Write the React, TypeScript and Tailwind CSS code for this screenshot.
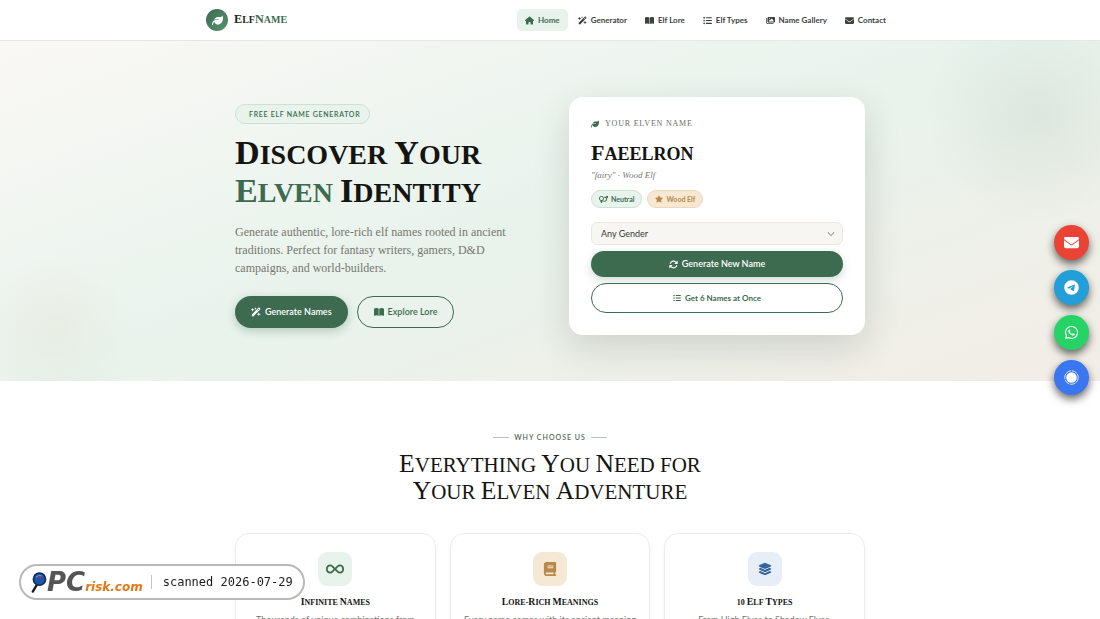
import type { ReactNode } from "react";
import { BsChevronDown } from "react-icons/bs";
import {
  FaArrowsRotate,
  FaBook,
  FaBookOpen,
  FaEnvelope,
  FaHouse,
  FaImages,
  FaInfinity,
  FaLayerGroup,
  FaLeaf,
  FaListUl,
  FaStar,
  FaTelegram,
  FaVenusMars,
  FaWandMagicSparkles,
  FaWhatsapp,
} from "react-icons/fa6";

const navItems = [
  { label: "Home", icon: FaHouse, active: true },
  { label: "Generator", icon: FaWandMagicSparkles },
  { label: "Elf Lore", icon: FaBookOpen },
  { label: "Elf Types", icon: FaListUl },
  { label: "Name Gallery", icon: FaImages },
  { label: "Contact", icon: FaEnvelope },
];

const features = [
  {
    title: "Infinite Names",
    text: "Thousands of unique combinations from authentic elven roots.",
    icon: FaInfinity,
    iconSize: "size-[18px]",
    tone: "bg-[#e8f3ec] text-[#3d6b4f]",
  },
  {
    title: "Lore-Rich Meanings",
    text: "Every name comes with its ancient meaning and history.",
    icon: FaBook,
    iconSize: "size-3.5",
    tone: "bg-[#f5e9d6] text-[#b8894a]",
  },
  {
    title: "10 Elf Types",
    text: "From High Elves to Shadow Elves, understanding every kin.",
    icon: FaLayerGroup,
    iconSize: "size-3.5",
    tone: "bg-[#e8eef8] text-[#336699]",
  },
];

// Tall small caps: every letter is a capital, the real capitals stand out a bit
function SmallCaps({ text }: { text: string }) {
  return (
    <span className="uppercase">
      {text.split(/(\s|-)/).map((word, i) =>
        /^[A-Z]/.test(word) ? (
          <span
            key={i}
            className="inline-block leading-none first-letter:text-[1.22em]"
          >
            {word}
          </span>
        ) : (
          word
        ),
      )}
    </span>
  );
}

function Header() {
  return (
    <header className="border-b border-[#e6e8e5] bg-white">
      <div className="mx-auto flex h-10 max-w-[688px] items-center justify-between">
        <a href="#" className="flex items-center gap-1.5">
          <span className="flex size-[22px] items-center justify-center rounded-full bg-linear-to-br from-[#3d6b4f] to-[#569270] text-white">
            <FaLeaf className="size-[11px]" />
          </span>
          <span className="font-['Liberation_Serif',serif] text-[10px] leading-4 font-bold text-[#1c2a20]">
            <SmallCaps text="Elf" />
            <span className="text-[#3d6b4f]">
              <SmallCaps text="Name" />
            </span>
          </span>
        </a>
        <nav className="flex items-center gap-0.5">
          {navItems.map(({ label, icon: Icon, active }) => (
            <a
              key={label}
              href="#"
              className={`flex h-[22px] items-center gap-1 rounded-[5px] px-2 text-[8px] font-bold ${
                active ? "bg-[#e8f3ec] text-[#3d6b4f]" : "text-[#3b423d]"
              }`}
            >
              <Icon className="size-[9px]" />
              {label}
            </a>
          ))}
        </nav>
      </div>
    </header>
  );
}

function NameCard() {
  return (
    <div className="rounded-[14px] bg-white p-[22px] shadow-[0_12px_36px_rgba(40,50,40,0.16)]">
      <p className="flex items-center gap-1.5 font-['Liberation_Serif',serif] text-[8px] leading-[10px] tracking-widest text-[#6b6b65] uppercase">
        <FaLeaf className="size-2 text-[#3d6b4f]" />
        Your Elven Name
      </p>
      <h2 className="mt-[11px] font-['Liberation_Serif',serif] text-[18px] leading-7 font-bold text-[#141412]">
        <SmallCaps text="Faeelron" />
      </h2>
      <p className="mt-px font-['Liberation_Serif',serif] text-[9px] leading-3 text-[#77776f] italic">
        "fairy" · Wood Elf
      </p>
      <div className="mt-[9px] flex gap-[5px] text-[7px] font-bold">
        <span className="flex h-[18px] items-center gap-[3px] rounded-full border border-[#cfe0d5] bg-[#e8f3ec] px-[7px] text-[#3d6b4f]">
          <FaVenusMars className="size-[9px]" />
          Neutral
        </span>
        <span className="flex h-[18px] items-center gap-[3px] rounded-full border border-[#ecd9bc] bg-[#f7e8d3] px-[7px] text-[#b8894a]">
          <FaStar className="size-2" />
          Wood Elf
        </span>
      </div>
      <div className="relative mt-3.5">
        <select
          aria-label="Gender"
          className="block h-[23px] w-full appearance-none rounded-md border border-[#ebe8e3] bg-[#f8f6f3] px-[9px] text-[9px] text-[#333a35]"
        >
          <option>Any Gender</option>
          <option>Female</option>
          <option>Male</option>
          <option>Neutral</option>
        </select>
        <BsChevronDown className="pointer-events-none absolute top-2 right-2 size-2 text-[#444]" />
      </div>
      <button className="mt-1.5 flex h-[26px] w-full items-center justify-center gap-1 rounded-full bg-[#3d6b4f] text-[9px] font-semibold text-white shadow-[0_3px_8px_rgba(61,107,79,0.25)]">
        <FaArrowsRotate className="size-[9px]" />
        Generate New Name
      </button>
      <button className="mt-1.5 flex h-[30px] w-full items-center justify-center gap-1 rounded-full border border-[#3d6b4f] text-[8px] font-bold text-[#3d6b4f]">
        <FaListUl className="size-2" />
        Get 6 Names at Once
      </button>
    </div>
  );
}

function Hero() {
  return (
    <section className="relative overflow-hidden bg-linear-[160deg] from-[#faf8f5] via-[#e8f3ec] to-[#f3ede6] pt-14 pb-[46px]">
      <div className="absolute -top-10 -right-12 size-56 rounded-full bg-radial from-[#3d6b4f]/8 to-[#3d6b4f]/0 to-70%" />
      <div className="absolute -bottom-8 -left-6 size-40 rounded-full bg-radial from-[#b8894a]/6 to-[#b8894a]/0 to-70%" />
      <div className="relative mx-auto grid max-w-[630px] grid-cols-2 items-center gap-[38px]">
        <div>
          <p className="flex h-5 w-fit items-center rounded-full border border-[#cfe0d5] bg-[#e8f3ec] pr-[9px] pl-[13px] text-[7px] font-semibold tracking-widest text-[#3d6b4f] uppercase">
            Free Elf Name Generator
          </p>
          <h1 className="mt-3 font-['Liberation_Serif',serif] text-[28px] leading-[38px] font-bold text-[#141412]">
            <SmallCaps text="Discover Your" />
            <br />
            <span className="text-[#3d6b4f]">
              <SmallCaps text="Elven" />
            </span>{" "}
            <SmallCaps text="Identity" />
          </h1>
          <p className="mt-[11px] font-['Liberation_Serif',serif] text-xs leading-[18px] text-[#77776f]">
            Generate authentic, lore-rich elf names rooted in ancient
            <br />
            traditions. Perfect for fantasy writers, gamers, D&amp;D
            <br />
            campaigns, and world-builders.
          </p>
          <div className="mt-[19px] flex gap-[9px] text-[9px] font-semibold">
            <button className="flex h-8 items-center gap-1 rounded-full bg-[#3d6b4f] px-4 text-white shadow-[0_3px_10px_rgba(61,107,79,0.3)]">
              <FaWandMagicSparkles className="size-2.5" />
              Generate Names
            </button>
            <button className="flex h-8 items-center gap-1 rounded-full border border-[#3d6b4f] px-4 text-[#3d6b4f]">
              <FaBookOpen className="size-2.5" />
              Explore Lore
            </button>
          </div>
        </div>
        <NameCard />
      </div>
    </section>
  );
}

function Features() {
  return (
    <section className="bg-white pt-[50px] pb-14">
      <p className="flex items-center justify-center gap-[5px] text-[7px] leading-3 font-semibold tracking-[1px] text-[#4f6757] uppercase">
        <span className="h-px w-4 bg-[#b5c3ba]" />
        Why Choose Us
        <span className="h-px w-4 bg-[#b5c3ba]" />
      </p>
      <h2 className="mt-2 text-center font-['Liberation_Serif',serif] text-[21px] leading-[26px] text-[#141412]">
        <SmallCaps text="Everything You Need for" />
        <br />
        <SmallCaps text="Your Elven Adventure" />
      </h2>
      <div className="mx-auto mt-7 grid max-w-[630px] grid-cols-3 gap-3.5">
        {features.map(({ title, text, icon: Icon, iconSize, tone }) => (
          <article
            key={title}
            className="flex flex-col items-center rounded-[14px] border border-[#ecece9] px-3 pt-[18px] pb-5 text-center shadow-[0_1px_4px_rgba(0,0,0,0.04)]"
          >
            <span
              className={`flex size-[34px] items-center justify-center rounded-[9px] ${tone}`}
            >
              <Icon className={iconSize} />
            </span>
            <h3 className="mt-[11px] font-['Liberation_Serif',serif] text-[8px] leading-3 font-bold text-[#141412]">
              <SmallCaps text={title} />
            </h3>
            <p className="mt-1 text-[9px] leading-[14px] text-[#77776f]">
              {text}
            </p>
          </article>
        ))}
      </div>
    </section>
  );
}

function ContactLink({
  label,
  tone,
  children,
}: {
  label: string;
  tone: string;
  children: ReactNode;
}) {
  return (
    <a
      href="#"
      aria-label={label}
      className={`flex size-[35px] items-center justify-center rounded-full text-white shadow-[0_4px_8px_rgba(0,0,0,0.6)] ${tone}`}
    >
      {children}
    </a>
  );
}

function ContactLinks() {
  return (
    <aside className="fixed top-[225px] right-[11px] flex flex-col gap-2.5">
      <ContactLink label="Email" tone="bg-[#ea4335]">
        <FaEnvelope className="size-[15px]" />
      </ContactLink>
      <ContactLink label="Telegram" tone="bg-[#229ed9]">
        <FaTelegram className="size-[15px]" />
      </ContactLink>
      <ContactLink label="WhatsApp" tone="bg-[#25d366]">
        <FaWhatsapp className="size-[15px]" />
      </ContactLink>
      <ContactLink label="Signal" tone="bg-[#3a76f0]">
        <svg viewBox="0 0 16 16" className="size-[15px]">
          <circle cx="8" cy="8" r="5.6" fill="currentColor" />
          <circle
            cx="8"
            cy="8"
            r="7.2"
            fill="none"
            stroke="currentColor"
            strokeWidth="0.9"
            strokeDasharray="6 0.8"
          />
        </svg>
      </ContactLink>
    </aside>
  );
}

function ScanBadge() {
  return (
    <div className="fixed top-[564px] left-[19px] flex h-9 w-[286px] items-center rounded-full border-2 border-[#b9b9b9] bg-white pl-2.5">
      <svg viewBox="0 0 16 22" className="h-[21px] w-4">
        <path d="M6 13 1.5 20.5" stroke="#151a2c" strokeWidth="2.4" strokeLinecap="round" />
        <circle cx="8.5" cy="7.5" r="6.4" fill="#1558b0" stroke="#14264f" strokeWidth="1.6" />
        <path d="M5 5.5Q8 2.5 11 4.5" stroke="#5d9ae0" strokeWidth="1.2" fill="none" />
        <path d="m7 5 4-.6-1.5 3.4z" fill="#c2263b" />
      </svg>
      <span className="flex items-baseline font-['DejaVu_Sans',sans-serif] font-bold italic">
        <span className="text-[26px] leading-8 text-[#555]">PC</span>
        <span className="text-xs text-[#ea7614]">risk.com</span>
      </span>
      <span className="mr-[11px] ml-2 h-3.5 w-px bg-[#c4c4c4]" />
      <span className="font-['DejaVu_Sans_Mono',monospace] text-xs whitespace-nowrap text-[#1b1b1b]">
        scanned 2026-07-29
      </span>
    </div>
  );
}

export default function App() {
  return (
    <div className="min-h-screen bg-white font-['Lato',sans-serif]">
      <Header />
      <main>
        <Hero />
        <Features />
      </main>
      <ContactLinks />
      <ScanBadge />
    </div>
  );
}
